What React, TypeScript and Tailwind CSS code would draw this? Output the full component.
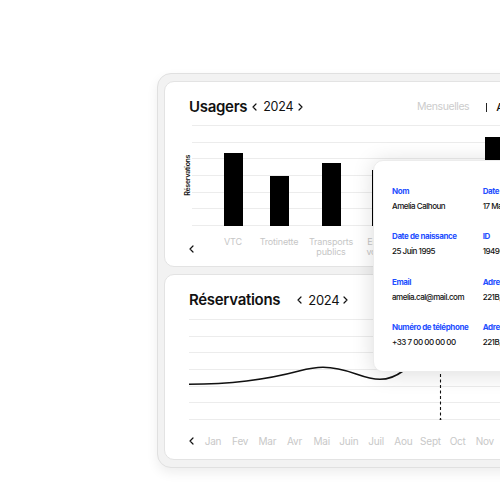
import React from "react";

const Chev = ({ dir = "left", className = "" }: { dir?: "left" | "right"; className?: string }) => (
  <svg viewBox="0 0 5 8" className={className} fill="none" stroke="#111" strokeWidth="1.2" strokeLinecap="round" strokeLinejoin="round">
    {dir === "left" ? <polyline points="4,1 1,4 4,7" /> : <polyline points="1,1 4,4 1,7" />}
  </svg>
);

const GridLines = ({ color = "bg-[#ececec]" }: { color?: string }) => (
  <div className="absolute left-0 top-0 w-full h-[101px] flex flex-col justify-between">
    {[0, 1, 2, 3, 4, 5, 6].map((i) => (
      <div key={i} className={`h-px w-full ${color}`} />
    ))}
  </div>
);

const bars = [
  { h: 72, cls: "ml-[21px]", label: ["VTC"] },
  { h: 49, cls: "ml-[6px]", label: ["Trotinette"] },
  { h: 62, cls: "ml-[12px]", label: ["Transports", "publics"] },
  { h: 55, cls: "ml-[10px]", label: ["Engins", "volants"] },
  { h: 40, cls: "ml-[16px]", label: [] as string[] },
  { h: 88, cls: "ml-[17px]", label: [] as string[] },
];

const months = ["Jan", "Fev", "Mar", "Avr", "Mai", "Juin", "Juil", "Aou", "Sept", "Oct", "Nov"];

const fields = [
  [
    { l: "Nom", v: "Amelia Calhoun" },
    { l: "Date d'inscription", v: "17 Mars 2024" },
  ],
  [
    { l: "Date de naissance", v: "25 Juin 1995" },
    { l: "ID", v: "19490327" },
  ],
  [
    { l: "Email", v: "amelia.cal@mail.com" },
    { l: "Adresse", v: "221B, Baker St" },
  ],
  [
    { l: "Numéro de téléphone", v: "+33 7 00 00 00 00" },
    { l: "Adresse", v: "221B, Baker St" },
  ],
];

export default function App() {
  return (
    <div
      className="relative w-[500px] h-[501px] overflow-hidden bg-white"
      style={{ fontFamily: "Inter, 'Liberation Sans', sans-serif" }}
    >
      <div className="ml-[157px] mt-[73px] w-[420px] h-[395px] rounded-[14px] border border-[#e0e0e0] bg-[#f2f2f2] shadow-[0_5px_12px_rgba(0,0,0,0.07)] pt-[7px] pl-[6px] flex flex-col gap-[7px]">
        {/* Card 1 */}
        <div className="w-[420px] h-[186px] rounded-[10px] border border-[#e3e3e3] bg-white overflow-hidden">
          <div className="pt-[16px] pl-[24px] flex items-center h-[34px]">
            <div className="w-[228px] flex items-center">
              <span className="text-[15px] leading-[18px] font-semibold tracking-[-0.02em] text-[#111]">Usagers</span>
              <Chev className="w-[5px] h-[8px] ml-[5px]" />
              <span className="ml-[6px] text-[12.5px] leading-[18px] text-[#111] tracking-[-0.02em]">2024</span>
              <Chev dir="right" className="w-[5px] h-[8px] ml-[5px]" />
            </div>
            <span className="text-[10.5px] leading-[18px] text-[#cccccc] tracking-[-0.04em]">Mensuelles</span>
            <div className="ml-[17px] w-px h-[9px] bg-[#222]" />
            <span className="ml-[9px] text-[11px] leading-[18px] font-medium text-[#111]">Annuelles</span>
          </div>
          <div className="flex mt-[9px]">
            <div className="w-[27px] flex flex-col">
              <div className="h-[101px] w-[8px] ml-[19px] flex items-center justify-center">
                <span className="-rotate-90 whitespace-nowrap text-[7px] font-semibold text-[#111] tracking-[-0.04em]">Réservations</span>
              </div>
              <Chev className="w-[5px] h-[8px] ml-[24px] mt-[19px]" />
            </div>
            <div className="relative flex-1">
              <GridLines />
              <div className="relative flex">
                {bars.map((b, i) => (
                  <div key={i} className={`w-[40px] flex flex-col items-center ${b.cls}`}>
                    <div className="h-[101px] flex items-end">
                      <div className="w-[19px] bg-black" style={{ height: b.h + 1 }} />
                    </div>
                    <div className="mt-[11px] text-[9px] leading-[10px] text-[#c6c6c6] text-center whitespace-nowrap tracking-[-0.02em]">
                      {b.label.map((t) => (
                        <div key={t}>{t}</div>
                      ))}
                    </div>
                  </div>
                ))}
              </div>
            </div>
          </div>
        </div>
        {/* Card 2 */}
        <div className="w-[420px] h-[186px] rounded-[10px] border border-[#e3e3e3] bg-white overflow-hidden">
          <div className="pt-[16px] pl-[24px] flex items-center h-[34px]">
            <span className="text-[15px] leading-[18px] font-semibold tracking-[-0.02em] text-[#111]">Réservations</span>
            <Chev className="w-[5px] h-[8px] ml-[17px]" />
            <span className="ml-[6px] text-[13px] leading-[18px] text-[#111] tracking-[-0.02em]">2024</span>
            <Chev dir="right" className="w-[5px] h-[8px] ml-[4px]" />
          </div>
          <div className="relative ml-[24px] mt-[10px] h-[101px]">
            <GridLines />
            <svg className="absolute left-0 top-0" width="390" height="101" viewBox="0 0 390 101" fill="none">
              <path
                d="M0 65.3 C 40 65.3, 80 60, 110 52 C 120 49.5, 128 48.3, 134 48.3 C 160 48.3, 172 60.3, 191 60.3 C 200 60.3, 206 58, 214 52 C 230 40, 245 30, 260 25"
                stroke="#111"
                strokeWidth="1.6"
              />
              <line x1="251.5" y1="0" x2="251.5" y2="100" stroke="#111" strokeWidth="1.1" strokeDasharray="3 2.5" />
              <circle cx="251.5" cy="100.5" r="0.9" fill="#111" />
            </svg>
          </div>
          <div className="ml-[24px] mt-[15px] flex items-center h-[12px]">
            <Chev className="w-[5px] h-[8px]" />
            <div className="ml-[5.4px] flex">
              {months.map((m) => (
                <div key={m} className="w-[27.2px] text-center text-[10px] leading-[12px] text-[#c8c8c8] tracking-[-0.02em]">
                  {m}
                </div>
              ))}
            </div>
          </div>
        </div>
      </div>

      {/* Popup */}
      <div className="absolute left-[373px] top-[160px] w-[220px] h-[212px] rounded-[10px] bg-white border border-[#ececec] shadow-[0_2px_22px_rgba(0,0,0,0.14)] pt-[25px] pl-[18px] flex flex-col gap-[20.3px]">
        {fields.map((row, i) => (
          <div key={i} className="flex">
            {row.map((f, j) => (
              <div key={j} className={j === 0 ? "w-[90.7px]" : ""}>
                <div className="text-[8px] leading-[10px] font-bold text-[#1f4fff] tracking-[-0.05em] whitespace-nowrap">{f.l}</div>
                <div className="mt-[5px] text-[8px] leading-[10px] font-medium text-[#111] tracking-[-0.06em] whitespace-nowrap">{f.v}</div>
              </div>
            ))}
          </div>
        ))}
      </div>
    </div>
  );
}
